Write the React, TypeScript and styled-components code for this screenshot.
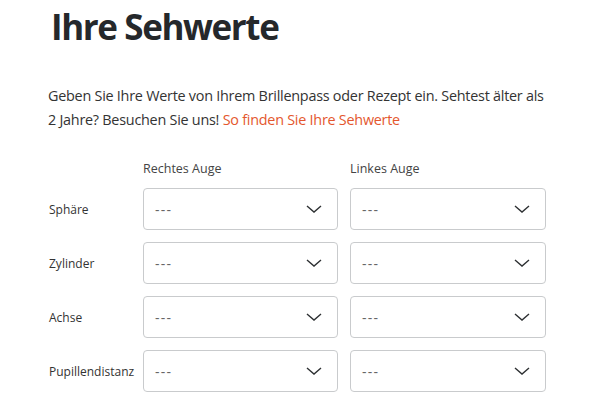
import React from "react";
import styled, { createGlobalStyle } from "styled-components";

const Global = createGlobalStyle`
  html, body { margin: 0; padding: 0; background: #fff; }
  body { font-family: "Open Sans", "Noto Sans", sans-serif; -webkit-font-smoothing: antialiased; }
`;

const Page = styled.div`
  padding: 5px 0 0 48px;
  width: 560px;
  box-sizing: border-box;
`;

const Title = styled.h1`
  margin: 0 0 0 3px;
  font-size: 35px;
  line-height: 44px;
  font-weight: 700;
  color: #25282b;
  letter-spacing: -1.4px;
`;

const Intro = styled.p`
  margin: 35px 0 0 0;
  max-width: 500px;
  font-size: 14.4px;
  line-height: 24px;
  color: #333;
  letter-spacing: -0.25px;
`;

const Link = styled.a`
  color: #e4572e;
  text-decoration: none;
`;

const Form = styled.div`
  margin-top: 28px;
  display: grid;
  grid-template-columns: 83px 195px 196px;
  column-gap: 12px;
  row-gap: 12px;
  align-items: center;
`;

const ColHead = styled.div`
  font-size: 12.5px;
  color: #444;
  line-height: 18px;
  margin-bottom: -2px;
`;

const RowLabel = styled.div`
  font-size: 12px;
  color: #333;
  padding-left: 1px;
  white-space: nowrap;
`;

const Select = styled.div`
  height: 42px;
  box-sizing: border-box;
  border: 1px solid #c9cbcd;
  border-radius: 4px;
  display: flex;
  align-items: center;
  justify-content: space-between;
  padding: 0 15px 0 11px;
  font-size: 14px;
  letter-spacing: 1.3px;
  color: #666;
`;

const Chevron = () => (
  <svg width="16" height="8" viewBox="0 0 16 8" fill="none">
    <path d="M1 1l7 6 7-6" stroke="#2e3133" strokeWidth="1.4" />
  </svg>
);

const rows = ["Sphäre", "Zylinder", "Achse", "Pupillendistanz"];

export default function App() {
  return (
    <Page>
      <Global />
      <Title>Ihre Sehwerte</Title>
      <Intro>
        Geben Sie Ihre Werte von Ihrem Brillenpass oder Rezept ein. Sehtest älter als 2 Jahre? Besuchen Sie uns!{" "}
        <Link href="#">So finden Sie Ihre Sehwerte</Link>
      </Intro>
      <Form>
        <div />
        <ColHead>Rechtes Auge</ColHead>
        <ColHead>Linkes Auge</ColHead>
        {rows.map((r) => (
          <React.Fragment key={r}>
            <RowLabel>{r}</RowLabel>
            <Select>
              <span>---</span>
              <Chevron />
            </Select>
            <Select>
              <span>---</span>
              <Chevron />
            </Select>
          </React.Fragment>
        ))}
      </Form>
    </Page>
  );
}
